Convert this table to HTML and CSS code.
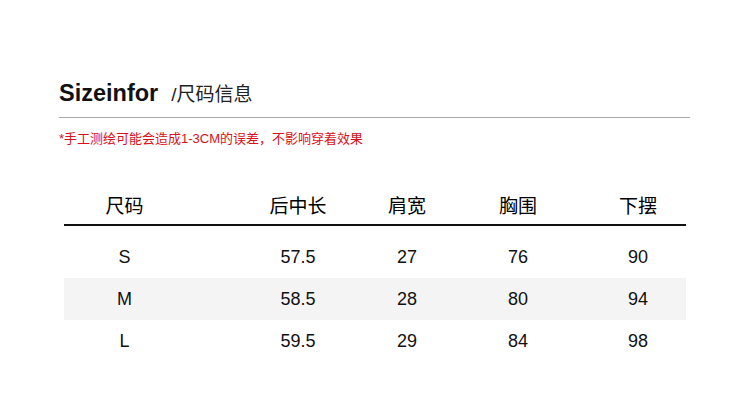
FILE: index.html
```html
<!DOCTYPE html>
<html lang="zh">
<head>
<meta charset="utf-8">
<title>Sizeinfor</title>
<link rel="stylesheet" href="styles.css">
</head>
<body>
<div class="page">
  <div class="title-row">
    <span class="title-en">Sizeinfor</span>
    <span class="title-cn">/尺码信息</span>
  </div>
  <p class="note">*手工测绘可能会造成1-3CM的误差，不影响穿着效果</p>
  <div class="table">
    <div class="row head">
      <div class="cell c1">尺码</div>
      <div class="cell">后中长</div>
      <div class="cell">肩宽</div>
      <div class="cell">胸围</div>
      <div class="cell c5">下摆</div>
    </div>
    <div class="row body">
      <div class="cell c1">S</div>
      <div class="cell">57.5</div>
      <div class="cell">27</div>
      <div class="cell">76</div>
      <div class="cell c5">90</div>
    </div>
    <div class="row body alt">
      <div class="cell c1">M</div>
      <div class="cell">58.5</div>
      <div class="cell">28</div>
      <div class="cell">80</div>
      <div class="cell c5">94</div>
    </div>
    <div class="row body">
      <div class="cell c1">L</div>
      <div class="cell">59.5</div>
      <div class="cell">29</div>
      <div class="cell">84</div>
      <div class="cell c5">98</div>
    </div>
  </div>
</div>
</body>
</html>
```
FILE: styles.css
```css
html, body {
  margin: 0;
  padding: 0;
  background: #ffffff;
}
body {
  font-family: "Liberation Sans", Arial, "Noto Sans CJK SC", sans-serif;
  color: #000;
}
.page {
  width: 631px;
  padding: 79px 0 0 59px;
}
.title-row {
  display: flex;
  align-items: baseline;
  height: 28px;
  line-height: 28px;
  padding-bottom: 10px;
  border-bottom: 1px solid #a9a9a9;
}
.title-en {
  font-size: 23.5px;
  font-weight: bold;
  color: #111;
}
.title-cn {
  font-size: 19px;
  margin-left: 13px;
  color: #222;
}
.note {
  margin: 12px 0 0 0;
  font-size: 13px;
  line-height: 18px;
  color: #d8101a;
}
.table {
  margin: 40px 0 0 5px;
  width: 622px;
}
.row {
  display: grid;
  grid-template-columns: 179px 110px 108px 114px 111px;
  text-align: center;
}
.head {
  height: 36px;
  line-height: 38px;
  font-size: 19px;
  border-bottom: 2px solid #111;
  margin-bottom: 10px;
}
.body {
  height: 42px;
  line-height: 43px;
  font-size: 18px;
  color: #111;
}
.alt {
  background: #f4f4f4;
}
.c1 {
  padding-right: 58px;
}
.c5 {
  padding-left: 15px;
}
```
